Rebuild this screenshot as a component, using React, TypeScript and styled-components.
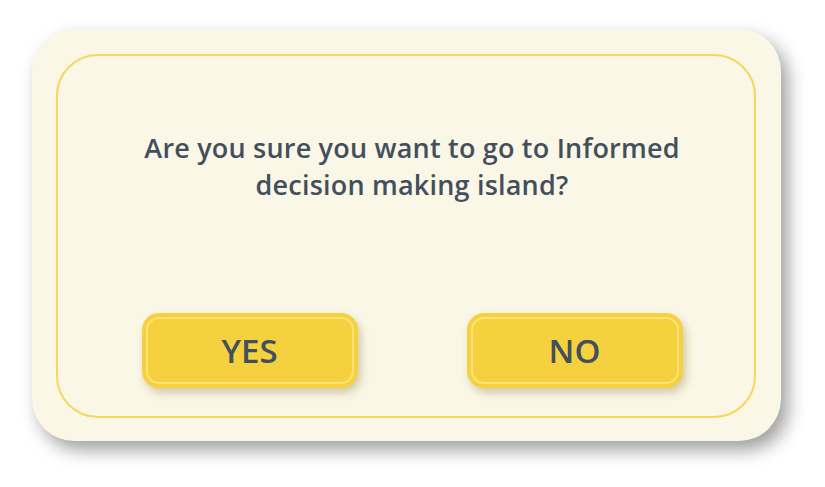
import React from "react";
import styled, { createGlobalStyle } from "styled-components";

const Global = createGlobalStyle`
  html, body { margin: 0; padding: 0; background: #ffffff; }
  body { font-family: "Open Sans", "Noto Sans", sans-serif; }
`;

const Page = styled.div`
  width: 825px;
  height: 487px;
  padding: 29px 0 0 32px;
  box-sizing: border-box;
`;

const Card = styled.div`
  width: 749px;
  height: 412px;
  box-sizing: border-box;
  padding: 25px 25px 23px 24px;
  background: #faf7e6;
  border-radius: 42px;
  box-shadow: 7px 9px 18px rgba(0, 0, 0, 0.38);
`;

const Frame = styled.div`
  height: 100%;
  box-sizing: border-box;
  border: 2.5px solid #f6d75c;
  border-radius: 42px;
  display: flex;
  flex-direction: column;
  align-items: center;
  padding: 73px 0 28px 12px;
`;

const Question = styled.p`
  margin: 0;
  max-width: 600px;
  text-align: center;
  font-family: "Open Sans", sans-serif;
  font-weight: 600;
  font-size: 27px;
  letter-spacing: 0.2px;
  line-height: 37px;
  color: #434f5d;
`;

const Actions = styled.div`
  margin-top: auto;
  display: flex;
  gap: 109px;
`;

const Button = styled.button`
  position: relative;
  width: 216px;
  height: 75px;
  border: none;
  border-radius: 17px;
  background: #f5d13f;
  box-shadow: 3px 5px 9px rgba(120, 100, 20, 0.3);
  font-family: "Open Sans", sans-serif;
  font-weight: 600;
  font-size: 33px;
  color: #434f5d;
  cursor: pointer;
  &::after {
    content: "";
    position: absolute;
    inset: 4px;
    border: 2.5px solid #fde378;
    border-radius: 13px;
    pointer-events: none;
  }
`;

export default function App() {
  return (
    <>
      <Global />
      <Page>
        <Card>
          <Frame>
            <Question>
              Are you sure you want to go to Informed
              <br />
              decision making island?
            </Question>
            <Actions>
              <Button>YES</Button>
              <Button>NO</Button>
            </Actions>
          </Frame>
        </Card>
      </Page>
    </>
  );
}
